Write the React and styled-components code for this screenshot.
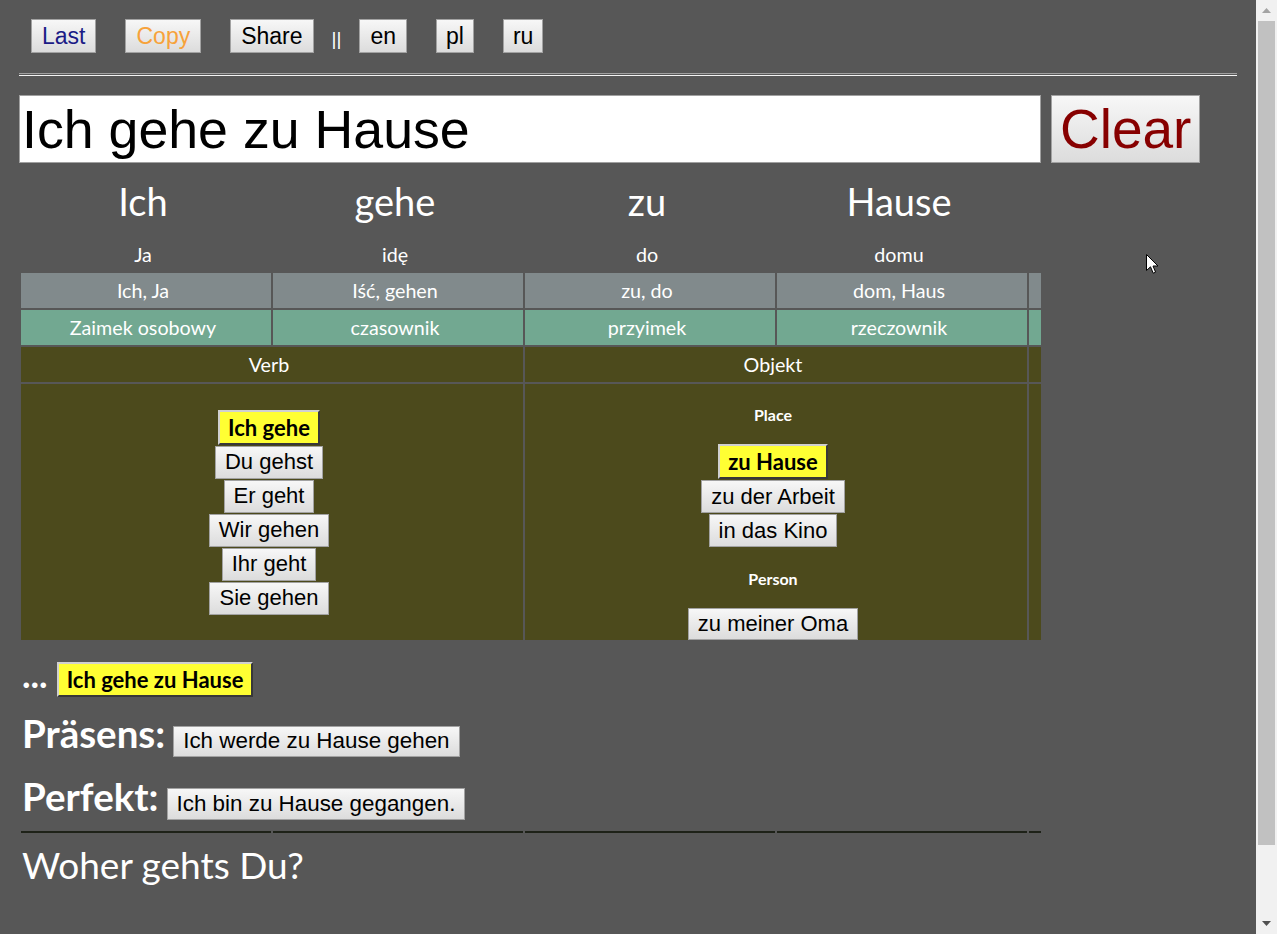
import React from 'react';
import styled, { createGlobalStyle, css } from 'styled-components';

const GlobalStyle = createGlobalStyle`
  html, body {
    margin: 0;
    padding: 0;
    height: 100%;
    overflow: hidden;
    background: #575757;
  }
  body {
    font-family: Lato, "Liberation Sans", sans-serif;
    color: #fff;
  }
`;

const words = [
  { de: 'Ich', tr: 'Ja', base: 'Ich, Ja', kind: 'Zaimek osobowy' },
  { de: 'gehe', tr: 'idę', base: 'Iść, gehen', kind: 'czasownik' },
  { de: 'zu', tr: 'do', base: 'zu, do', kind: 'przyimek' },
  { de: 'Hause', tr: 'domu', base: 'dom, Haus', kind: 'rzeczownik' },
];

const verbForms = ['Ich gehe', 'Du gehst', 'Er geht', 'Wir gehen', 'Ihr geht', 'Sie gehen'];
const places = ['zu Hause', 'zu der Arbeit', 'in das Kino'];

const App = () => {
  return (
    <Page>
      <GlobalStyle />
      <Main>
        <Toolbar>
          <ToolButton $color="#1b1b86">Last</ToolButton>
          <ToolButton $color="#f7a23a">Copy</ToolButton>
          <ToolButton>Share</ToolButton>
          <Divider>||</Divider>
          <ToolButton>en</ToolButton>
          <ToolButton $pad={9}>pl</ToolButton>
          <ToolButton $pad={9}>ru</ToolButton>
        </Toolbar>
        <Rule />
        <InputRow>
          <SentenceInput defaultValue="Ich gehe zu Hause" />
          <ClearButton>Clear</ClearButton>
        </InputRow>

        <Grid>
          <colgroup>
            <col width="250" />
            <col width="250" />
            <col width="250" />
            <col width="250" />
            <col width="12" />
          </colgroup>
          <tbody>
            <tr>
              {words.map((w) => (
                <WordCell key={w.de}>{w.de}</WordCell>
              ))}
              <WordCell />
            </tr>
            <tr>
              {words.map((w) => (
                <TransCell key={w.de}>{w.tr}</TransCell>
              ))}
              <TransCell />
            </tr>
            <tr>
              {words.map((w) => (
                <InfoCell key={w.de} $bg="#818a8c">{w.base}</InfoCell>
              ))}
              <InfoCell $bg="#818a8c" />
            </tr>
            <tr>
              {words.map((w) => (
                <InfoCell key={w.de} $bg="#72a891">{w.kind}</InfoCell>
              ))}
              <InfoCell $bg="#72a891" />
            </tr>
            <tr>
              <InfoCell colSpan={2} $bg="#4c4a1c">Verb</InfoCell>
              <InfoCell colSpan={2} $bg="#4c4a1c">Objekt</InfoCell>
              <InfoCell $bg="#4c4a1c" />
            </tr>
            <tr>
              <BigCell colSpan={2}>
                <Stack>
                  {verbForms.map((v, i) =>
                    i === 0 ? (
                      <PickedButton key={v}>{v}</PickedButton>
                    ) : (
                      <WordButton key={v}>{v}</WordButton>
                    )
                  )}
                </Stack>
              </BigCell>
              <BigCell colSpan={2} $top>
                <Stack>
                  <GroupTitle>Place</GroupTitle>
                  {places.map((p, i) =>
                    i === 0 ? (
                      <PickedButton key={p}>{p}</PickedButton>
                    ) : (
                      <WordButton key={p}>{p}</WordButton>
                    )
                  )}
                  <GroupTitle>Person</GroupTitle>
                  <WordButton $h={32}>zu meiner Oma</WordButton>
                </Stack>
              </BigCell>
              <BigCell />
            </tr>
          </tbody>
        </Grid>

        <ResultRow>
          <Dots>...</Dots>
          <PickedButton>Ich gehe zu Hause</PickedButton>
        </ResultRow>
        <TenseRow $mt={14}>
          <TenseLabel>Präsens:</TenseLabel>
          <WordButton $h={31} $fs={22.4}>Ich werde zu Hause gehen</WordButton>
        </TenseRow>
        <TenseRow $mt={17}>
          <TenseLabel>Perfekt:</TenseLabel>
          <WordButton $h={32} $fs={22.4}>Ich bin zu Hause gegangen.</WordButton>
        </TenseRow>
        <LineRow>
          <LineSeg />
          <LineSeg />
          <LineSeg />
          <LineSeg />
          <LineSeg />
        </LineRow>
        <Question>Woher gehts Du?</Question>
      </Main>

      <Scrollbar>
        <ScrollArrow>
          <svg width="9" height="5" viewBox="0 0 9 5">
            <path d="M4.5 0 L9 5 L0 5 Z" fill="#a3a3a3" />
          </svg>
        </ScrollArrow>
        <Thumb />
        <ScrollSpacer />
        <ScrollArrow>
          <svg width="9" height="5" viewBox="0 0 9 5">
            <path d="M0 0 L9 0 L4.5 5 Z" fill="#505050" />
          </svg>
        </ScrollArrow>
      </Scrollbar>

      <Pointer width="13" height="21" viewBox="0 0 13 21">
        <path
          d="M0.5 0.5 L0.5 16.5 L4.5 12.8 L7.2 19.2 L9.6 18.2 L7 12 L12 12 Z"
          fill="#fff"
          stroke="#000"
          strokeWidth="1"
        />
      </Pointer>
    </Page>
  );
};

export default App;

const Page = styled.div`
  position: relative;
  display: flex;
  height: 100vh;
  background: #575757;
`;

const Main = styled.div`
  flex: 1;
  min-width: 0;
  padding: 19px 19px 0;
`;

const Toolbar = styled.div`
  display: flex;
  align-items: center;
  gap: 29px;
  padding-left: 12px;
  height: 34px;
`;

const buttonFace = css`
  background: linear-gradient(#f7f7f7, #dcdcdc);
  border: 1px solid #a2a2a2;
  box-sizing: border-box;
  font-family: 'Liberation Sans', Arial, sans-serif;
  cursor: pointer;
`;

const ToolButton = styled.button`
  ${buttonFace};
  height: 34px;
  padding: 0 ${(p) => p.$pad || 10}px;
  font-size: 23px;
  color: ${(p) => p.$color || '#000'};
`;

const Divider = styled.span`
  font-family: 'Liberation Sans', Arial, sans-serif;
  font-size: 19px;
  color: #fff;
  margin: 6px -11px 0;
`;

const Rule = styled.hr`
  margin: 20px 0 0;
  height: 1px;
  border: none;
  border-top: 1px solid #a0a0a0;
  border-bottom: 1px solid #f4f4f4;
`;

const InputRow = styled.div`
  display: flex;
  gap: 10px;
  margin-top: 19px;
`;

const SentenceInput = styled.input`
  width: 1022px;
  height: 68px;
  box-sizing: border-box;
  border: 1px solid #a0a0a0;
  padding: 0 2px;
  font-family: 'Liberation Sans', Arial, sans-serif;
  font-size: 53.7px;
  color: #000;
  background: #fff;
  outline: none;
`;

const ClearButton = styled.button`
  ${buttonFace};
  height: 68px;
  padding: 0 8px;
  font-size: 55px;
  color: #870000;
`;

const Grid = styled.table`
  margin-top: 2px;
  width: 1024px;
  table-layout: fixed;
  border-collapse: separate;
  border-spacing: 2px;
`;

const cellBase = css`
  padding: 0 6px 0 0;
  text-align: center;
  vertical-align: middle;
  color: #fff;
  font-family: Lato, 'Liberation Sans', sans-serif;
`;

const WordCell = styled.td`
  ${cellBase};
  height: 72px;
  padding-bottom: 4px;
  box-sizing: border-box;
  font-size: 38px;
`;

const TransCell = styled.td`
  ${cellBase};
  height: 30px;
  padding-bottom: 4px;
  box-sizing: border-box;
  font-size: 19.7px;
`;

const InfoCell = styled.td`
  ${cellBase};
  height: 35px;
  font-size: 19.7px;
  background: ${(p) => p.$bg};
`;

const BigCell = styled.td`
  ${cellBase};
  height: 254px;
  background: #4c4a1c;
  vertical-align: ${(p) => (p.$top ? 'top' : 'middle')};
`;

const Stack = styled.div`
  display: flex;
  flex-direction: column;
  align-items: center;
  gap: 1px;
`;

const GroupTitle = styled.div`
  font-size: 16px;
  font-weight: bold;
  line-height: 16px;
  margin: 23px 0 20px;
`;

const WordButton = styled.button`
  ${buttonFace};
  height: ${(p) => p.$h || 33}px;
  padding: 0 9px;
  font-size: ${(p) => p.$fs || 22}px;
  color: #000;
`;

const PickedButton = styled.button`
  height: 35px;
  box-sizing: border-box;
  padding: 0 8px;
  background: #ffff33;
  border: 2px outset #d0d0d0;
  border-right-color: #8c8c8c;
  border-bottom-color: #8c8c8c;
  font-family: Lato, 'Liberation Sans', sans-serif;
  font-weight: bold;
  font-size: 22px;
  color: #000;
  cursor: pointer;
`;

const ResultRow = styled.div`
  display: flex;
  align-items: baseline;
  margin-top: 11px;
  padding-left: 3px;
  gap: 9px;
`;

const Dots = styled.span`
  font-size: 36px;
  font-weight: bold;
  line-height: 43px;
`;

const TenseRow = styled.div`
  display: flex;
  align-items: baseline;
  gap: 8px;
  margin-top: ${(p) => p.$mt}px;
  padding-left: 3px;
`;

const TenseLabel = styled.span`
  font-size: 38.5px;
  font-weight: bold;
  line-height: 45px;
`;

const LineRow = styled.div`
  display: grid;
  grid-template-columns: 250px 250px 250px 250px 12px;
  gap: 2px;
  padding: 0 2px;
  margin-top: 11px;
`;

const LineSeg = styled.div`
  border-top: 2px solid #1e2218;
`;

const Question = styled.div`
  margin-top: 9px;
  padding-left: 3px;
  font-size: 37px;
  line-height: 46px;
`;

const Scrollbar = styled.div`
  width: 21px;
  flex-shrink: 0;
  display: flex;
  flex-direction: column;
  align-items: center;
  background: #f1f1f1;
`;

const ScrollArrow = styled.div`
  height: 21px;
  width: 100%;
  display: flex;
  align-items: center;
  justify-content: center;
`;

const Thumb = styled.div`
  width: 17px;
  height: 824px;
  background: #c1c1c1;
`;

const ScrollSpacer = styled.div`
  flex: 1;
`;

const Pointer = styled.svg`
  position: absolute;
  left: 1146px;
  top: 254px;
`;
